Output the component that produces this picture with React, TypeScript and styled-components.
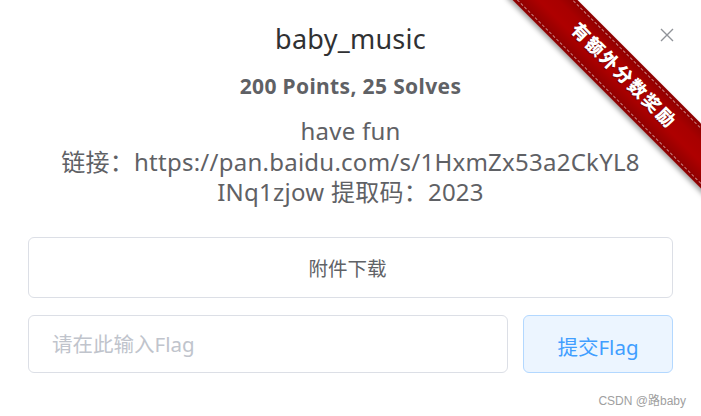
import React from "react";
import styled, { createGlobalStyle } from "styled-components";

const Global = createGlobalStyle`
  html, body { margin: 0; padding: 0; background: #ffffff; }
  body { font-family: "Noto Sans", "Noto Sans CJK SC", sans-serif; overflow: hidden; }
  * { box-sizing: border-box; }
`;

const Page = styled.div`
  position: relative;
  width: 701px;
  height: 416px;
  overflow: hidden;
  background: #fff;
  display: flex;
  flex-direction: column;
  align-items: stretch;
  padding: 20px 28px 0 28px;
`;

const Title = styled.h2`
  margin: 0;
  text-align: center;
  font-size: 27px;
  line-height: 38px;
  font-weight: 400;
  letter-spacing: 0.25px;
  color: #303133;
`;

const Points = styled.div`
  margin-top: 14px;
  text-align: center;
  font-size: 21px;
  line-height: 28px;
  font-weight: 700;
  letter-spacing: 0.35px;
  color: #5f6165;
`;

const Description = styled.div`
  margin-top: 16px;
  text-align: center;
  font-size: 24px;
  line-height: 30.5px;
  letter-spacing: 0.25px;
  color: #5f6165;
`;

const DownloadButton = styled.button`
  margin-top: 29px;
  height: 61px;
  width: 100%;
  border: 1px solid #dcdfe6;
  border-radius: 6px;
  background: #fff;
  color: #606266;
  font-family: inherit;
  font-size: 19.5px;
  padding: 0 6px 0 0;
  cursor: pointer;
`;

const FlagRow = styled.div`
  margin-top: 17px;
  display: flex;
  gap: 15px;
  height: 58px;
`;

const FlagInput = styled.input`
  flex: 1;
  height: 100%;
  border: 1px solid #dcdfe6;
  border-radius: 6px;
  padding: 0 23px;
  font-family: inherit;
  font-size: 20.5px;
  color: #606266;
  outline: none;
  &::placeholder { color: #c0c4cc; }
`;

const SubmitButton = styled.button`
  width: 150px;
  height: 100%;
  border: 1px solid #b3d8ff;
  border-radius: 6px;
  background: #ecf5ff;
  color: #409eff;
  font-family: inherit;
  font-size: 20.5px;
  padding: 4px 0 0;
  cursor: pointer;
`;

const CloseButton = styled.button`
  position: absolute;
  top: 27px;
  right: 26px;
  width: 16px;
  height: 16px;
  padding: 0;
  border: none;
  background: transparent;
  cursor: pointer;
  display: flex;
  align-items: center;
  justify-content: center;
`;

const Ribbon = styled.div`
  position: absolute;
  left: 480px;
  top: 62px;
  width: 300px;
  height: 46px;
  transform: rotate(45deg);
  transform-origin: center;
  background: linear-gradient(to bottom, #8c0000 0%, #a80000 30%, #ae0000 60%, #8a0000 100%);
  box-shadow: 0 3px 5px rgba(0, 0, 0, 0.35);
  display: flex;
  align-items: center;
  justify-content: center;
  color: #fff;
  font-family: "Noto Sans CJK SC", sans-serif;
  font-weight: 900;
  font-size: 18px;
  letter-spacing: 2px;
  text-shadow: 0 1px 1px rgba(0, 0, 0, 0.4);
  &::before {
    content: "";
    position: absolute;
    left: 0;
    right: 0;
    top: 3px;
    bottom: 3px;
    border-top: 1px dashed rgba(255, 255, 255, 0.5);
    border-bottom: 1px dashed rgba(255, 255, 255, 0.5);
  }
`;

const RibbonText = styled.span`
  position: relative;
  transform: translate(-11px, -4px);
`;

const Watermark = styled.div`
  position: absolute;
  right: 15px;
  bottom: 8px;
  font-family: "Liberation Sans", "Noto Sans CJK SC", sans-serif;
  font-size: 12px;
  color: #a0a0a0;
`;

export default function App() {
  return (
    <>
      <Global />
      <Page>
        <Title>baby_music</Title>
        <Points>200 Points, 25 Solves</Points>
        <Description>
          have fun
          <br />
          链接：https://pan.baidu.com/s/1HxmZx53a2CkYL8
          <br />
          INq1zjow 提取码：2023
        </Description>
        <DownloadButton>附件下载</DownloadButton>
        <FlagRow>
          <FlagInput placeholder="请在此输入Flag" />
          <SubmitButton>提交Flag</SubmitButton>
        </FlagRow>
        <Ribbon>
          <RibbonText>有额外分数奖励</RibbonText>
        </Ribbon>
        <CloseButton aria-label="close">
          <svg width="14" height="14" viewBox="0 0 14 14">
            <path d="M1 1 L13 13 M13 1 L1 13" stroke="#909399" strokeWidth="1.4" fill="none" />
          </svg>
        </CloseButton>
        <Watermark>CSDN @路baby</Watermark>
      </Page>
    </>
  );
}
